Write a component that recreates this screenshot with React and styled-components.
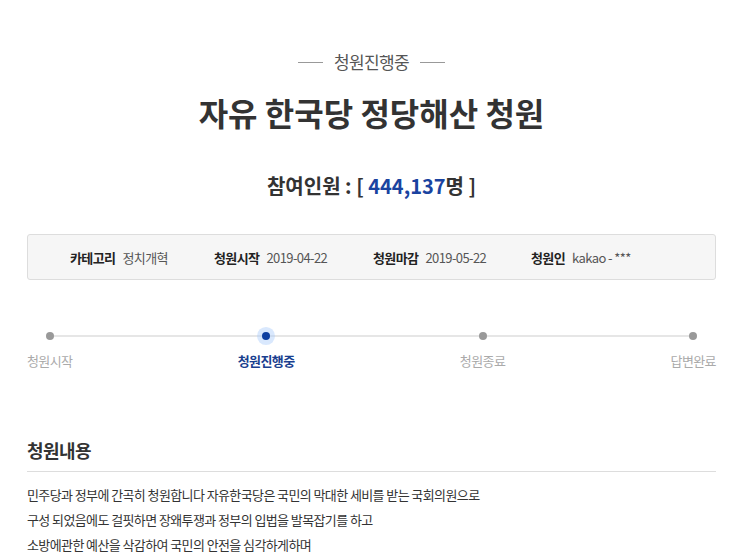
import React from 'react'
import styled, { createGlobalStyle } from 'styled-components'

const GlobalStyle = createGlobalStyle`
    body {
        margin: 0;
        background: #fff;
        font-family: "Noto Sans CJK KR", "Noto Sans", sans-serif;
        color: #333;
    }
`

const steps = [
    { label: '청원시작' },
    { label: '청원진행중', active: true },
    { label: '청원종료' },
    { label: '답변완료' },
]

const info = [
    { label: '카테고리', value: '정치개혁' },
    { label: '청원시작', value: '2019-04-22' },
    { label: '청원마감', value: '2019-05-22' },
    { label: '청원인', value: 'kakao - ***' },
]

const lines = [
    '민주당과 정부에 간곡히 청원합니다 자유한국당은 국민의 막대한 세비를 받는 국회의원으로',
    '구성 되었음에도 걸핏하면 장왜투쟁과 정부의 입법을 발목잡기를 하고',
    '소방에관한 예산을 삭감하여 국민의 안전을 심각하게하며',
]

function App() {
    return (
        <Page>
            <GlobalStyle />
            <Status>청원진행중</Status>
            <Title>자유 한국당 정당해산 청원</Title>
            <Count>
                참여인원 : [ <span>444,137</span>명 ]
            </Count>

            <InfoBox>
                {info.map((item) => (
                    <InfoItem key={item.label}>
                        <strong>{item.label}</strong>
                        <span>{item.value}</span>
                    </InfoItem>
                ))}
            </InfoBox>

            <Progress>
                <Track />
                {steps.map((step) => (
                    <Step key={step.label}>
                        <DotRow>
                            <Dot active={step.active} />
                        </DotRow>
                        <StepLabel active={step.active}>{step.label}</StepLabel>
                    </Step>
                ))}
            </Progress>

            <SectionTitle>청원내용</SectionTitle>
            <Body>
                {lines.map((line, i) => (
                    <p key={i}>{line}</p>
                ))}
            </Body>
        </Page>
    )
}

export default App

const Page = styled.div`
    padding: 50px 27px 0;
    width: 689px;
`
const Status = styled.div`
    display: flex;
    align-items: center;
    justify-content: center;
    gap: 11px;
    font-size: 17px;
    line-height: 24px;
    letter-spacing: -0.6px;
    color: #555;
    &::before, &::after {
        content: '';
        width: 25px;
        height: 1px;
        background: #999;
    }
`
const Title = styled.h1`
    margin: 18px 0 0;
    text-align: center;
    font-size: 32px;
    line-height: 40px;
    font-weight: 700;
    letter-spacing: 0;
    color: #333;
`
const Count = styled.div`
    margin-top: 40px;
    text-align: center;
    font-size: 20px;
    line-height: 28px;
    font-weight: 700;
    color: #333;
    span {
        color: #1a43a0;
    }
`
const InfoBox = styled.div`
    margin-top: 34px;
    height: 44px;
    display: grid;
    grid-template-columns: 144px 159px 158px auto;
    align-items: center;
    padding-left: 42px;
    background: #f6f6f6;
    border: 1px solid #ddd;
    border-radius: 3px;
`
const InfoItem = styled.div`
    display: flex;
    align-items: center;
    gap: 7px;
    font-size: 13px;
    letter-spacing: -0.6px;
    strong {
        font-weight: 700;
        color: #222;
    }
    span {
        font-weight: 400;
        color: #555;
    }
`
const Progress = styled.div`
    position: relative;
    margin-top: 47px;
    display: flex;
    justify-content: space-between;
`
const Track = styled.div`
    position: absolute;
    left: 22px;
    right: 22px;
    top: 8px;
    height: 2px;
    background: #e6e6e6;
`
const Step = styled.div`
    position: relative;
    display: flex;
    flex-direction: column;
    align-items: center;
`
const DotRow = styled.div`
    height: 18px;
    display: flex;
    align-items: center;
    justify-content: center;
`
const Dot = styled.div`
    width: 8px;
    height: 8px;
    border-radius: 50%;
    background: ${(p) => (p.active ? '#0d3fa0' : '#999')};
    box-shadow: ${(p) => (p.active ? '0 0 0 5px rgba(170, 205, 250, 0.45)' : 'none')};
`
const StepLabel = styled.div`
    margin-top: 7px;
    font-size: 13px;
    line-height: 18px;
    letter-spacing: -0.6px;
    font-weight: ${(p) => (p.active ? 700 : 400)};
    color: ${(p) => (p.active ? '#1a3f8f' : '#aaa')};
`
const SectionTitle = styled.h2`
    margin: 68px 0 0;
    padding-bottom: 9px;
    border-bottom: 1px solid #ddd;
    font-size: 18px;
    line-height: 24px;
    font-weight: 700;
    letter-spacing: -0.6px;
    color: #333;
`
const Body = styled.div`
    margin-top: 10px;
    p {
        margin: 0;
        font-size: 13px;
        line-height: 25px;
        letter-spacing: -0.6px;
        color: #333;
    }
`
